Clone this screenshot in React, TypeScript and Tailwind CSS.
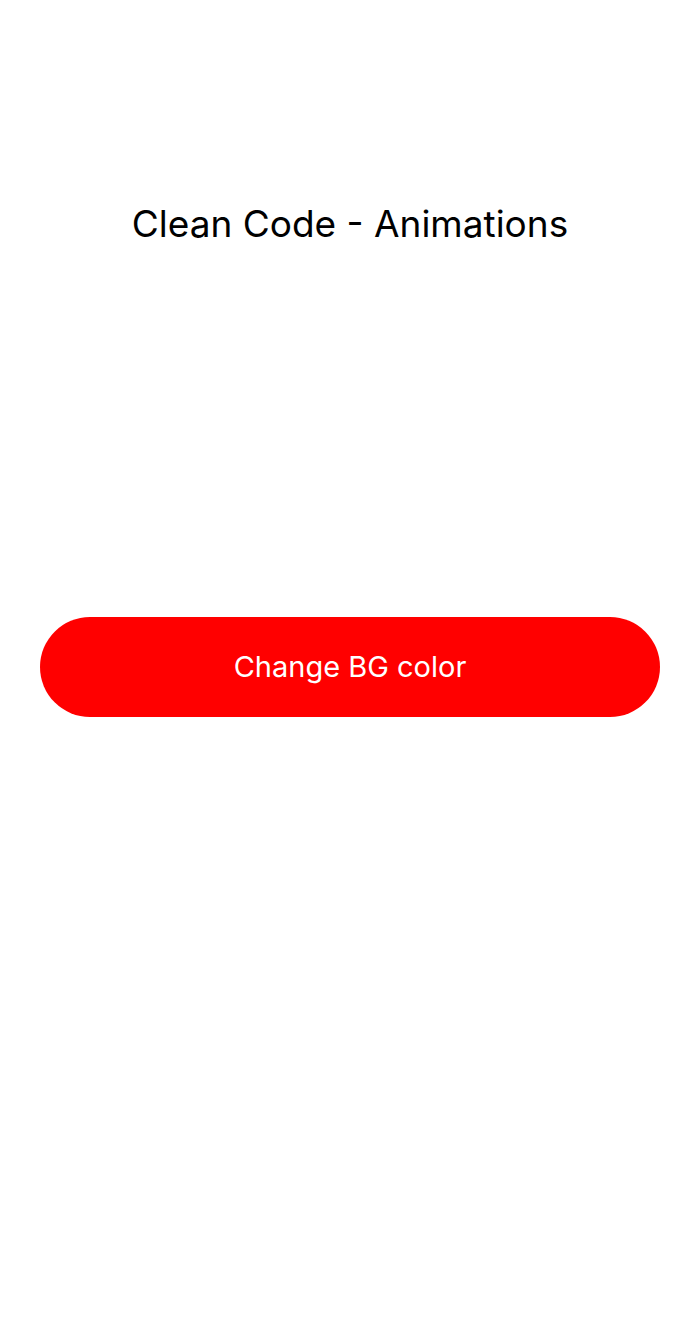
import React, { useState } from 'react';

const App: React.FC = () => {
  const [bg, setBg] = useState<boolean>(false);

  return (
    <div
      className={`min-h-[1334px] w-full flex flex-col items-center ${bg ? 'bg-gray-100' : 'bg-white'}`}
      style={{ fontFamily: 'Inter, "Noto Sans", sans-serif' }}
    >
      <h1 className="mt-[200px] h-[48px] leading-[48px] text-[37px] font-normal text-black">
        Clean Code - Animations
      </h1>
      <div className="mt-[369px] w-full px-[40px]">
        <button
          className="w-full h-[100px] rounded-[50px] bg-[#ff0000] text-white text-[29px] leading-[34px]"
          onClick={() => setBg(!bg)}
        >
          Change BG color
        </button>
      </div>
    </div>
  );
};

export default App;
